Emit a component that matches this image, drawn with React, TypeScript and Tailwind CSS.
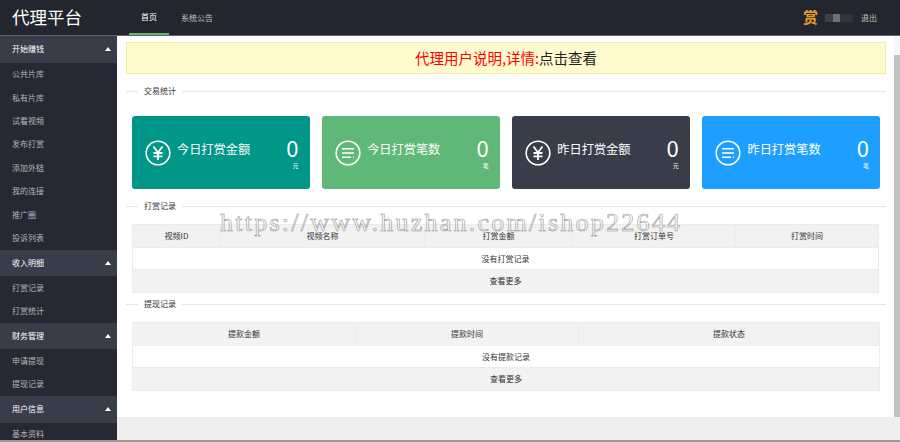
const font = "font-['Noto_Sans_CJK_SC','Liberation_Sans',sans-serif]";

const menu = [
  { title: '开始赚钱', items: ['公共片库', '私有片库', '试看视频', '发布打赏', '添加外链', '我的连接', '推广圈', '投诉列表'] },
  { title: '收入明细', items: ['打赏记录', '打赏统计'] },
  { title: '财务管理', items: ['申请提现', '提现记录'] },
  { title: '用户信息', items: ['基本资料'] },
];

const YenIcon = () => (
  <svg viewBox="0 0 26 26" className="h-[26px] w-[26px] shrink-0" fill="none" stroke="white">
    <circle cx="13" cy="13" r="11.8" strokeWidth="1.6" />
    <path d="M8.5 6.5 13 12.5 17.5 6.5M13 12.5V20M8.5 13h9M8.5 16.3h9" strokeWidth="1.8" />
  </svg>
);

const ListIcon = () => (
  <svg viewBox="0 0 26 26" className="h-[26px] w-[26px] shrink-0" fill="none" stroke="white">
    <circle cx="13" cy="13" r="11.8" strokeWidth="1.6" />
    <path d="M7 8.8h12M7 13h12M7 17.2h9M18 17.2h1" strokeWidth="1.6" />
  </svg>
);

const cards = [
  { title: '今日打赏金额', unit: '元', icon: <YenIcon />, bg: 'bg-[#009688]' },
  { title: '今日打赏笔数', unit: '笔', icon: <ListIcon />, bg: 'bg-[#5fb878]' },
  { title: '昨日打赏金额', unit: '元', icon: <YenIcon />, bg: 'bg-[#393d49]' },
  { title: '昨日打赏笔数', unit: '笔', icon: <ListIcon />, bg: 'bg-[#1e9fff]' },
];

const Legend = ({ title, className }: { title: string; className: string }) => (
  <div className={`flex items-center text-[8px] leading-[10px] text-[#333] ${className}`}>
    <div className="h-px w-3 bg-[#e6e6e6]" />
    <span className="px-1.5">{title}</span>
    <div className="h-px flex-1 bg-[#e6e6e6]" />
  </div>
);

const RecordTable = ({
  cols,
  empty,
  className,
}: {
  cols: { name: string; width: string }[];
  empty: string;
  className: string;
}) => (
  <table className={`table-fixed border-collapse text-center text-[8px] text-[#333] ${className}`}>
    <thead>
      <tr className="h-[23px] bg-[#f2f2f2]">
        {cols.map((c) => (
          <th key={c.name} className={`border border-[#ececec] font-normal ${c.width}`}>
            {c.name}
          </th>
        ))}
      </tr>
    </thead>
    <tbody>
      <tr className="h-[22px] bg-white">
        <td colSpan={cols.length} className="border border-[#ececec]">{empty}</td>
      </tr>
      <tr className="h-[23px] bg-[#f2f2f2]">
        <td colSpan={cols.length} className="border border-[#ececec]">查看更多</td>
      </tr>
    </tbody>
  </table>
);

export default function App() {
  return (
    <div className={`relative flex h-[442px] w-[900px] flex-col overflow-hidden bg-white ${font}`}>
      {/* Header */}
      <header className="flex h-9 shrink-0 items-stretch border-b border-[#666] bg-[#23262e] text-[8px] text-[#c2c2c2]">
        <div className="flex w-[129px] items-center pl-3 text-[17.5px] text-white">代理平台</div>
        <div className="flex w-10 items-center justify-center border-b-2 border-[#5fb878] text-white">首页</div>
        <div className="flex items-center pl-3">系统公告</div>
        <div className="ml-auto flex items-center pr-[23px]">
          <span className="text-[15px] font-bold text-[#eaa023]">赏</span>
          <div className="ml-[7px] flex h-2 w-7 items-center">
            <div className="h-full w-2 bg-[#3c3f47]" />
            <div className="h-full w-[7px] bg-[#6e6f75]" />
            <div className="h-full w-[13px] bg-[#33353d]" />
          </div>
          <span className="ml-[8px]">退出</span>
        </div>
      </header>

      <div className="flex min-h-0 flex-1">
        {/* Sidebar */}
        <aside className="w-[117px] shrink-0 bg-[#262833] text-[8px] text-[#b5b5b5]">
          {menu.map((group) => (
            <div key={group.title}>
              <div className="flex h-[26.5px] items-center justify-between bg-[#393d49] pl-3 pr-[6px] text-white">
                <span>{group.title}</span>
                <div className="h-0 w-0 border-x-[3.5px] border-b-[4px] border-x-transparent border-b-white" />
              </div>
              {group.items.map((item) => (
                <div key={item} className="flex h-[23.4px] items-center pl-3">{item}</div>
              ))}
            </div>
          ))}
        </aside>

        <div className="flex min-w-0 flex-1 flex-col">
          <div className="flex min-h-0 flex-1">
            {/* Main */}
            <main className="min-w-0 flex-1 pl-[9px] pr-2 pt-1.5">
              <div className="flex h-8 items-center justify-center border border-[#f0eca0] bg-[#fffbcf] text-[14.5px] text-[#f00]">
                代理用户说明,详情:<span className="text-[#222]">点击查看</span>
              </div>

              <Legend title="交易统计" className="mt-[12px]" />

              <div className="mx-1.5 mt-5 grid grid-cols-4 gap-[12.67px]">
                {cards.map((c) => (
                  <div key={c.title} className={`flex h-[73px] items-center rounded-[3px] pl-[13px] pr-[11px] text-white ${c.bg}`}>
                    {c.icon}
                    <span className="mb-1.5 ml-[6px] text-[12.2px]">{c.title}</span>
                    <div className="ml-auto flex flex-col items-end">
                      <span className="text-[22px] leading-[26px]">0</span>
                      <span className="mt-px text-[6px] leading-[10px]">{c.unit}</span>
                    </div>
                  </div>
                ))}
              </div>

              <Legend title="打赏记录" className="mt-3" />
              <RecordTable
                className="ml-1.5 mt-[13px] w-[746px]"
                empty="没有打赏记录"
                cols={[
                  { name: '视频ID', width: 'w-[88px]' },
                  { name: '视频名称', width: 'w-[204px]' },
                  { name: '打赏金额', width: 'w-[148px]' },
                  { name: '打赏订单号', width: 'w-[163px]' },
                  { name: '打赏时间', width: 'w-[143px]' },
                ]}
              />

              <Legend title="提现记录" className="mt-1.5" />
              <RecordTable
                className="ml-1.5 mt-[13px] w-[747px]"
                empty="没有提款记录"
                cols={[
                  { name: '提款金额', width: 'w-[223px]' },
                  { name: '提款时间', width: 'w-[223px]' },
                  { name: '提款状态', width: 'w-[301px]' },
                ]}
              />
            </main>

            {/* Scrollbar */}
            <div className="flex w-1.5 shrink-0 flex-col bg-[#f7f7f7] pt-[19px]">
              <div className="flex-1 bg-[#c1c1c1]" />
            </div>
          </div>
          <div className="h-[23px] shrink-0 bg-[#eeeeee]" />
        </div>
      </div>
      <div className="h-0.5 shrink-0 bg-[#9a9a9a]" />

      {/* Watermark */}
      <div className="pointer-events-none absolute left-[220px] top-[205px] whitespace-nowrap font-['Liberation_Serif',serif] text-[26px] leading-[36px] tracking-[2.24px] text-white/20 [-webkit-text-stroke:0.6px_#999]">
        https://www.huzhan.com/ishop22644
      </div>
    </div>
  );
}
